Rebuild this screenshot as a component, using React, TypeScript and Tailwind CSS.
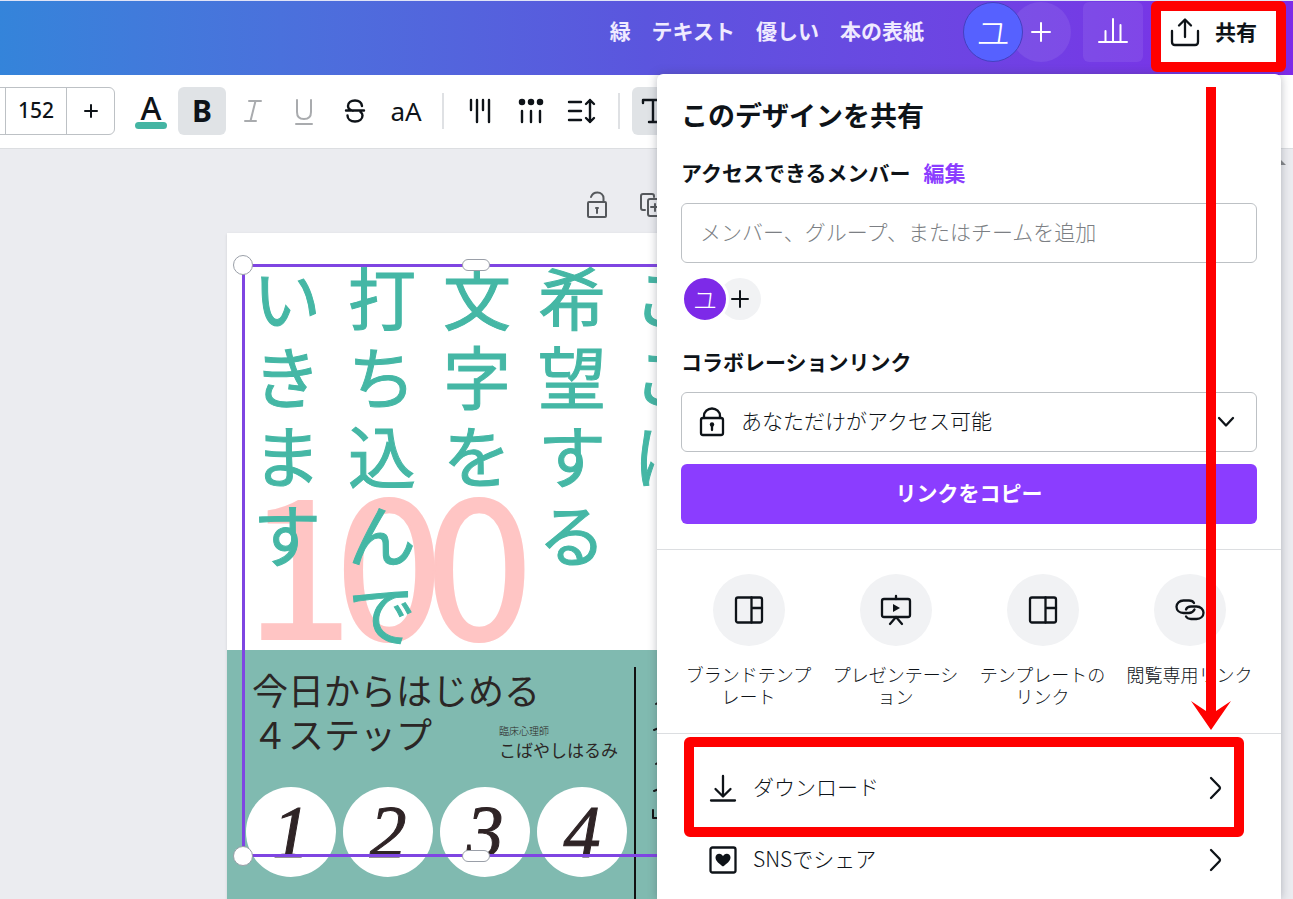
import { ReactNode } from "react";

const columns = ["いきます", "打ち込んで", "文字を", "希望する", "ここに"];

const steps = ["1", "2", "3", "4"];

const stroke = {
  fill: "none",
  stroke: "currentColor",
  strokeWidth: 2,
  strokeLinecap: "round" as const,
  strokeLinejoin: "round" as const,
};

function ToolButton({ label, active, muted, children }: { label: string; active?: boolean; muted?: boolean; children: ReactNode }) {
  return (
    <button
      aria-label={label}
      className={`flex h-12 w-12 shrink-0 items-center justify-center rounded-md ${active ? "bg-[#e0e3e6]" : ""} ${muted ? "text-[#a9abae]" : "text-[#0e1318]"}`}
    >
      {children}
    </button>
  );
}

function ToolDivider() {
  return <span className="mx-[9px] h-9 w-0.5 shrink-0 bg-[#dfe1e4]" />;
}

function LayoutIcon() {
  return (
    <svg width="32" height="32" viewBox="0 0 32 32" {...stroke} strokeWidth={2.3}>
      <rect x="3" y="3.500" width="26" height="25" rx="2" />
      <path d="M18.500 3.500V28.500M18.500 14H29" />
    </svg>
  );
}

function PresentIcon() {
  return (
    <svg width="36" height="36" viewBox="0 0 36 36" {...stroke} strokeWidth={2.3}>
      <rect x="4" y="7" width="28" height="18" rx="2" />
      <path d="M18 4V7M18 25L12 32M18 25L24 32" />
      <path d="M15 12V20L22 16Z" fill="currentColor" stroke="none" />
    </svg>
  );
}

function LinkIcon() {
  return (
    <svg width="32" height="32" viewBox="0 0 32 32" {...stroke} strokeWidth={2.3}>
      <path d="M20 9C19 7 17 6.500 15 6.500H9.500C5.500 6.500 2.500 9.200 2.500 12.800S5.500 19 9.500 19H15C17.500 19 19.500 17.500 20.500 15.500" />
      <path d="M12 15.500C12.800 13.500 15 12.500 17 12.500H22.500C26.500 12.500 29.500 15.200 29.500 18.800S26.500 25 22.500 25H17C14.800 25 13 24.200 12 22.500" />
    </svg>
  );
}

function LockIcon() {
  return (
    <svg width="26" height="30" viewBox="0 0 26 30" className="shrink-0" {...stroke} strokeWidth={2.3}>
      <rect x="2" y="11" width="22" height="17" rx="2" />
      <path d="M5 11V9A8 7.500 0 0 1 21 9V11" />
      <circle cx="13" cy="17.500" r="2.200" fill="currentColor" stroke="none" />
      <path d="M13 18V23" />
    </svg>
  );
}

function PlusIcon({ size }: { size: number }) {
  return (
    <svg width={size} height={size} viewBox={`0 0 ${size} ${size}`} {...stroke}>
      <path d={`M${size / 2} 1V${size - 1}M1 ${size / 2}H${size - 1}`} />
    </svg>
  );
}

function ChevronRight() {
  return (
    <svg width="14" height="24" viewBox="0 0 14 24" {...stroke} strokeWidth={2.3}>
      <path d="M2 2L10.500 10.800Q11.500 12 10.500 13.200L2 22" />
    </svg>
  );
}

const shareTargets = [
  { label: "ブランドテンプレート", icon: <LayoutIcon /> },
  { label: "プレゼンテーション", icon: <PresentIcon /> },
  { label: "テンプレートのリンク", icon: <LayoutIcon /> },
  { label: "閲覧専用リンク", icon: <LinkIcon /> },
];

const actions = [
  {
    label: "ダウンロード",
    icon: (
      <svg width="28" height="28" viewBox="0 0 28 28" {...stroke} strokeWidth={2.3}>
        <path d="M14 2V22M6.500 15L14 22.500L21.500 15M2 26.500H26" />
      </svg>
    ),
  },
  {
    label: "SNSでシェア",
    icon: (
      <svg width="28" height="28" viewBox="0 0 28 28" {...stroke} strokeWidth={2.3}>
        <rect x="1.500" y="1.500" width="25" height="25" rx="2" />
        <path
          d="M14 20.500C10 17.500 6.500 15 6.500 11.500C6.500 9.300 8.200 7.700 10.200 7.700C12 7.700 13.300 8.800 14 10.200C14.700 8.800 16 7.700 17.800 7.700C19.800 7.700 21.500 9.300 21.500 11.500C21.500 15 18 17.500 14 20.500Z"
          fill="currentColor"
          stroke="none"
        />
      </svg>
    ),
  },
];

function Header() {
  return (
    <header className="flex h-[75px] shrink-0 items-start justify-end border-t border-[#dfe3f6] bg-linear-to-r from-[#3484da] via-[#5b55de] to-[#7d2ae8] pr-[11px] pt-px text-white">
      <h1 className="mr-[39px] text-[21px] leading-[56px] font-bold text-[#efeaff]">緑　テキスト　優しい　本の表紙</h1>
      <div className="mr-3 flex">
        <span className="z-10 flex h-[60px] w-[60px] items-center justify-center rounded-full border border-[#4540c0] bg-[#5661ff] text-[34px] leading-[56px] font-light">ユ</span>
        <button aria-label="メンバーを追加" className="-ml-3 flex h-[60px] w-[60px] items-center justify-center rounded-full bg-white/8">
          <PlusIcon size={20} />
        </button>
      </div>
      <button aria-label="インサイト" className="mr-3 flex h-[60px] w-[60px] items-center justify-center rounded-md bg-white/8">
        <svg width="32" height="32" viewBox="0 0 32 32" {...stroke}>
          <path d="M2 26H30M8.500 26V15M16 26V3M23.500 26V9" />
        </svg>
      </button>
      <button className="flex h-[60px] w-[127px] items-center gap-[15px] rounded-md bg-white pl-[15px] text-[21px] font-bold text-[#0e1318]">
        <svg width="30" height="30" viewBox="0 0 30 30" {...stroke} strokeWidth={2.3}>
          <path d="M15 20V3M9 8.500L15 2.500L21 8.500M2 14V25Q2 28 5 28H25Q28 28 28 25V14" />
        </svg>
        共有
      </button>
    </header>
  );
}

function Toolbar() {
  return (
    <div className="flex h-[74px] shrink-0 items-center gap-[3px] border-b border-[#dcdee1] bg-white pb-px text-[#0e1318]">
      <div className="-ml-11 flex h-12 shrink-0 rounded-md border border-[#bdc1c5] font-['Noto_Sans',sans-serif]">
        <button aria-label="小さく" className="flex w-[49px] items-center justify-center border-r border-[#bdc1c5]">
          <svg width="12" height="12" viewBox="0 0 12 12" {...stroke}>
            <path d="M1 6H11" />
          </svg>
        </button>
        <input aria-label="フォントサイズ" defaultValue="152" className="w-[61px] border-r border-[#bdc1c5] text-center text-[21px] font-medium" />
        <button aria-label="大きく" className="flex w-[47px] items-center justify-center">
          <PlusIcon size={14} />
        </button>
      </div>
      <span className="w-1.5" />
      <ToolButton label="テキストの色">
        <span className="flex flex-col items-center font-['Noto_Sans',sans-serif] text-[32px] leading-7 font-medium">
          A
          <span className="h-[7px] w-8 rounded-full bg-[#44b5a3]" />
        </span>
      </ToolButton>
      <ToolButton label="太字" active>
        <span className="font-['Noto_Sans',sans-serif] text-[30px] leading-[44px] font-bold">B</span>
      </ToolButton>
      <ToolButton label="斜体" muted>
        <svg width="26" height="26" viewBox="0 0 26 26" {...stroke}>
          <path d="M9 3H21M5 23H16M15.500 3L10.500 23" />
        </svg>
      </ToolButton>
      <ToolButton label="下線" muted>
        <svg width="26" height="30" viewBox="0 0 26 30" {...stroke}>
          <path d="M6 4V16Q6 23 13 23T20 16V4M5 28H21" />
        </svg>
      </ToolButton>
      <ToolButton label="取り消し線">
        <svg width="26" height="26" viewBox="0 0 26 26" {...stroke} strokeWidth={2.4}>
          <path d="M20 8C19.500 4.500 17 2.500 13 2.500S6 4.500 6 8C6 10.500 8 12 11 12.800M18.500 14C20 15 20.500 16 20.500 17.500C20.500 21 17.500 23.500 13 23.500S5.500 21 5.500 17.500M4 12.500H22" />
        </svg>
      </ToolButton>
      <ToolButton label="大文字">
        <span className="font-['Noto_Sans',sans-serif] text-[26px]">aA</span>
      </ToolButton>
      <ToolDivider />
      <ToolButton label="配置">
        <svg width="26" height="28" viewBox="0 0 26 28" {...stroke} strokeWidth={2.4}>
          <path d="M4 3V13M10 3V25M16 3V13M22 3V25" />
        </svg>
      </ToolButton>
      <ToolButton label="リスト">
        <svg width="28" height="28" viewBox="0 0 28 28" {...stroke} strokeWidth={2.4}>
          <path d="M5 14V25M14 14V25M23 14V25" />
          <path d="M5 5H5.010M14 5H14.010M23 5H23.010" strokeWidth="6.500" />
        </svg>
      </ToolButton>
      <ToolButton label="スペース">
        <svg width="30" height="28" viewBox="0 0 30 28" {...stroke} strokeWidth={2.4}>
          <path d="M2 5H14M2 14H14M2 23H14M23 3V25M19 7L23 3L27 7M19 21L23 25L27 21" />
        </svg>
      </ToolButton>
      <ToolDivider />
      <ToolButton label="縦書き" active>
        <svg width="30" height="28" viewBox="0 0 30 28" {...stroke} strokeWidth={2.4}>
          <path d="M2 6V3H22V6M12 3V25M8 25H16" />
        </svg>
      </ToolButton>
    </div>
  );
}

function DesignPage() {
  return (
    <div className="relative ml-[227px] h-[720px] w-[560px] shrink-0 bg-white shadow">
      {/* 100 */}
      <div className="absolute top-[225px] left-[27px] flex text-[194px] leading-[194px] text-[#ffc5c4] [-webkit-text-stroke:2px_#ffc5c4]">
        {["1", "0", "0"].map((digit, i) => (
          <span key={i} className="flex w-[90px] justify-center">{digit}</span>
        ))}
      </div>

      {/* 下半分 */}
      <div className="absolute inset-x-0 top-[417px] bottom-0 bg-[#80bab0] text-[#2b2625]">
        <p className="absolute top-[17px] left-[25px] text-[36px] leading-[44px]">
          今日からはじめる
          <br />
          ４ステップ
        </p>
        <p className="absolute top-[73px] left-[272px] text-[10px] leading-4 font-light">臨床心理師</p>
        <p className="absolute top-[88px] left-[272px] text-[17px] leading-6">こばやしはるみ</p>
        <span className="absolute top-[17px] bottom-0 left-[407px] w-0.5 bg-[#111]" />
        <div className="absolute top-[137px] left-[19px] flex gap-[7px]">
          {steps.map((step) => (
            <span key={step} className="flex h-[90px] w-[90px] items-center justify-center rounded-full bg-white font-['Liberation_Serif',serif] text-[74px] leading-[90px] text-[#2f2426] italic [-webkit-text-stroke:1px_#2f2426]">
              {step}
            </span>
          ))}
        </div>
        <svg className="absolute top-[50px] left-[424px] text-[#111]" width="10" height="125" viewBox="0 0 10 125" {...stroke}>
          <path d="M5 4L8 2M3 30L8 28M5 64L8 62M3 91L8 89M2 110V118H8" />
        </svg>
      </div>

      {/* 縦書きテキスト */}
      <div className="absolute top-[23px] left-[26px] flex gap-[27px] text-[68px] leading-[79px] text-[#45b7a5] [-webkit-text-stroke:1px_#45b7a5]">
        {columns.map((column) => (
          <p key={column} className="w-[68px] break-all">{column}</p>
        ))}
      </div>

      {/* 選択枠 */}
      <div className="absolute top-[31px] left-[15px] h-[593px] w-[468px] border-3 border-[#7f45e2]">
        <span className="absolute -top-3 -left-3 h-5 w-5 rounded-full border border-[#9a9fa8] bg-white" />
        <span className="absolute -bottom-3 -left-3 h-5 w-5 rounded-full border border-[#9a9fa8] bg-white" />
        <span className="absolute -top-2 left-[217px] h-3 w-7 rounded-full border border-[#9a9fa8] bg-white" />
        <span className="absolute -bottom-2 left-[217px] h-3 w-7 rounded-full border border-[#9a9fa8] bg-white" />
      </div>
    </div>
  );
}

function SharePanel() {
  return (
    <section className="absolute top-[74px] right-3 bottom-0 w-[624px] overflow-hidden rounded-t-md bg-white text-[#0e1318] shadow-[0_0_10px_rgba(60,64,80,0.35)]">
      <div className="px-6 pt-[23px] pb-[25px]">
        <h2 className="text-[27px] leading-9 font-bold">このデザインを共有</h2>
        <div className="mt-6 flex gap-[13px] text-[21px] leading-[30px] font-bold">
          <label htmlFor="members">アクセスできるメンバー</label>
          <a href="#edit" className="text-[#8b3dff]">編集</a>
        </div>
        <input
          id="members"
          placeholder="メンバー、グループ、またはチームを追加"
          className="mt-4 h-[60px] w-full rounded-md border border-[#bdc1c5] px-[18px] pb-1 text-[21px] font-light placeholder:text-[#7c7f84]"
        />
        <div className="mt-3 flex items-center">
          <span className="z-10 flex h-12 w-12 items-center justify-center rounded-full border-3 border-white bg-[#7d2ae8] text-[24px] leading-10 font-light text-white">ユ</span>
          <button aria-label="メンバーを追加" className="-ml-[10px] flex h-[42px] w-[42px] items-center justify-center rounded-full bg-[#f1f2f4]">
            <PlusIcon size={18} />
          </button>
        </div>
        <label htmlFor="access" className="mt-[23px] block text-[21px] leading-[30px] font-bold">コラボレーションリンク</label>
        <div className="mt-4 flex h-[60px] items-center rounded-md border border-[#bdc1c5] pr-[21px] pl-[17px]">
          <LockIcon />
          <select id="access" className="ml-[16px] h-full flex-1 appearance-none bg-transparent pb-0.5 text-[21px] font-light">
            <option>あなただけがアクセス可能</option>
          </select>
          <svg width="18" height="12" viewBox="0 0 18 12" {...stroke} strokeWidth={2.3}>
            <path d="M2 2L9 9.500L16 2" />
          </svg>
        </div>
        <button className="mt-3 h-[60px] w-full rounded-md bg-[#8b3dff] pb-0.5 text-[21px] font-bold text-white">リンクをコピー</button>
      </div>

      <div className="flex h-[184px] border-t border-[#dcdee1] px-[18px] pt-6">
        {shareTargets.map(({ label, icon }) => (
          <button key={label} className="flex flex-1 flex-col items-center">
            <span className="flex h-[72px] w-[72px] items-center justify-center rounded-full bg-[#f1f2f4]">{icon}</span>
            <span className="mt-[17px] w-[132px] text-[18px] leading-[22px] font-light break-all">{label}</span>
          </button>
        ))}
      </div>

      <div className="border-t border-[#dcdee1] pt-[18px]">
        {actions.map(({ label, icon }) => (
          <button key={label} className="flex h-[72px] w-full items-center pr-[58px] pl-[52px] text-[21px] font-light">
            {icon}
            <span className="ml-4 flex-1 pb-0.5 text-left">{label}</span>
            <ChevronRight />
          </button>
        ))}
      </div>
    </section>
  );
}

export default function App() {
  return (
    <div className="relative flex h-screen flex-col overflow-hidden bg-[#ebecf0] font-['Noto_Sans_CJK_JP',sans-serif]">
      <Header />
      <Toolbar />
      <main className="relative flex-1 overflow-hidden">
        <div className="flex h-[84px] items-center gap-7 pt-7 pl-[584px] text-[#55585c]">
          <svg width="26" height="30" viewBox="0 0 26 30" {...stroke}>
            <rect x="4" y="12" width="18" height="15" rx="1" />
            <path d="M7 7C8 4 10.500 2.500 13.500 2.500C17 2.500 19.500 5 19.500 8V12M13 18V23M12 18H14" />
          </svg>
          <svg width="28" height="28" viewBox="0 0 28 28" {...stroke}>
            <path d="M7 19H5Q3 19 3 17V5Q3 3 5 3H14Q16 3 16 5V6M17 13V20M13 16H21" />
            <rect x="10" y="8" width="18" height="17" rx="2" />
          </svg>
        </div>
        <DesignPage />
        <svg className="absolute top-[11px] right-[7px] text-[#85878a]" width="10" height="6" viewBox="0 0 10 6">
          <path d="M5 0L10 5H0Z" fill="currentColor" />
        </svg>
      </main>

      <SharePanel />

      {/* 操作手順の赤い目印 */}
      <div className="pointer-events-none absolute top-px right-[7px] h-[71px] w-[135px] rounded-md border-10 border-[#f00]" />
      <svg className="pointer-events-none absolute top-[87px] right-[62px]" width="40" height="643" viewBox="0 0 40 643" fill="#f00">
        <path d="M15 0H25V624L40 614L20 643L0 614L15 624Z" />
      </svg>
      <div className="pointer-events-none absolute top-[737px] right-[49px] h-[100px] w-[560px] rounded-md border-10 border-[#f00]" />
    </div>
  );
}
